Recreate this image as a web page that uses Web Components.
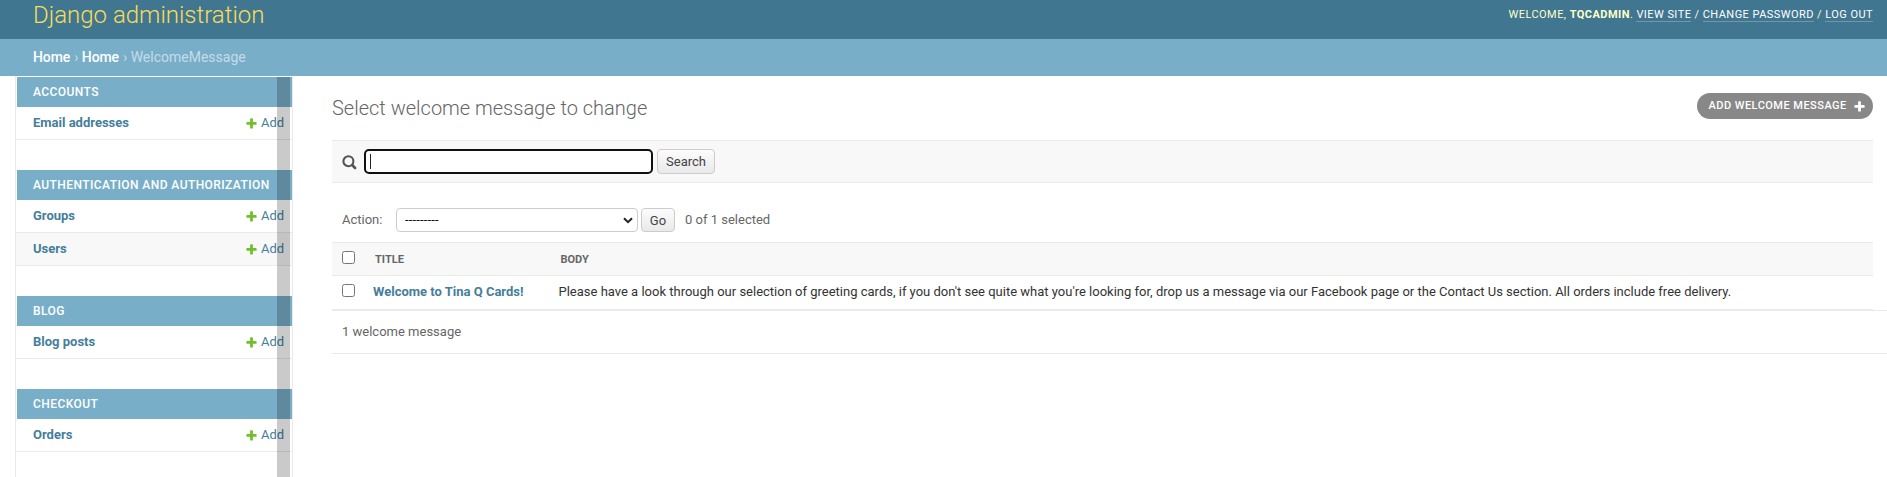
<!DOCTYPE html>
<html lang="en">
<head>
<meta charset="utf-8">
<title>Select welcome message to change | Django site admin</title>
<style>
html,body{margin:0;height:100%;overflow:hidden;background:#fff}
body{font-family:Roboto,"Liberation Sans",sans-serif;font-size:13px;color:#333}
</style>
</head>
<body>
<admin-page></admin-page>
<script>
const define=(name,html,setup)=>customElements.define(name,class extends HTMLElement{
  connectedCallback(){
    if(this.shadowRoot)return;
    const t=document.createElement('template');
    t.innerHTML=html;
    this.attachShadow({mode:'open'}).append(t.content.cloneNode(true));
    if(setup)setup(this,this.shadowRoot);
  }
});
const PLUS='M1600 796v192q0 40-28 68t-68 28h-416v416q0 40-28 68t-68 28h-192q-40 0-68-28t-28-68v-416h-416q-40 0-68-28t-28-68v-192q0-40 28-68t68-28h416v-416q0-40 28-68t68-28h192q40 0 68 28t28 68v416h416q40 0 68 28t28 68z';

define('admin-header',`<style>
:host{display:flex;justify-content:space-between;height:39px;box-sizing:border-box;padding:0 14px 0 33px;background:#417690;color:#ffc;overflow:hidden}
h1{margin:0;font-size:24px;font-weight:300;line-height:30px;color:#f5dd5d}
nav{font-size:11px;font-weight:400;letter-spacing:.45px;text-transform:uppercase;line-height:13px;padding-top:8px;white-space:nowrap}
strong{font-weight:700}
a{color:#fff;border-bottom:1px solid rgba(255,255,255,.25);text-decoration:none}
</style><h1>Django administration</h1>
<nav>Welcome, <strong>tqcadmin</strong>. <a>View site</a> / <a>Change password</a> / <a>Log out</a></nav>`);

define('bread-crumbs',`<style>
:host{display:block;height:37px;box-sizing:border-box;padding:10px 33px;background:#79aec8;color:#c4dce8;font-size:14px;line-height:16px}
::slotted(a){color:#fff;font-weight:500;letter-spacing:-.1px;margin-right:.5px}
</style><slot></slot>`);

define('add-link',`<style>
:host{display:flex;align-items:center;width:47px;color:#447e9b;font-size:13px}
svg{width:13px;height:13px;margin-right:3px}
</style><svg viewBox="0 0 1792 1792"><path fill="#70bf2b" d="${PLUS}"/></svg><span>Add</span>`);

define('model-row',`<style>
:host{display:flex;justify-content:space-between;align-items:flex-start;height:32px;box-sizing:content-box;border-bottom:1px solid #eaeaea;margin-left:-1px;padding:0 0 0 17px;background:#fff;line-height:32px}
:host([alt]){background:#f8f8f8}
b{color:#447e9b;font-weight:700;height:32px}
add-link{height:32px}
</style><b><slot></slot></b><add-link></add-link>`);

define('app-module',`<style>
:host{display:block;margin:0 0 30px 1px}
h2{margin:0;height:30px;line-height:30px;padding-left:16px;background:#79aec8;color:#fff;font-size:12px;font-weight:500;letter-spacing:.43px;text-transform:uppercase;white-space:nowrap}
</style><h2></h2><slot></slot>`,(h,r)=>r.querySelector('h2').textContent=h.getAttribute('label'));

define('nav-sidebar',`<style>
:host{display:block;position:relative;width:276px;margin-left:15px;padding-top:1px;border-left:1px solid #eaeaea;border-right:1px solid #eaeaea;box-sizing:content-box;flex:none}
.bar{position:absolute;top:1px;bottom:0;left:261px;width:13px;background:rgba(0,0,0,.208)}
</style>
<app-module label="Accounts"><model-row>Email addresses</model-row></app-module>
<app-module label="Authentication and Authorization"><model-row>Groups</model-row><model-row alt>Users</model-row></app-module>
<app-module label="Blog"><model-row>Blog posts</model-row></app-module>
<app-module label="Checkout"><model-row>Orders</model-row></app-module>
<div class="bar"></div>`);

define('page-title',`<style>
:host{display:flex;justify-content:space-between;align-items:flex-start;height:64px;padding-right:14px}
h1{margin:20px 0 0;font-size:20px;font-weight:300;line-height:24px;color:#666}
a{display:flex;align-items:center;margin-top:17px;width:176px;height:26px;border-radius:13px;background:#888;color:#fff;font-size:11px;font-weight:500;letter-spacing:.47px;text-transform:uppercase;box-sizing:border-box;padding:0 7px 2px 11.5px;justify-content:space-between;white-space:nowrap}
svg{width:13px;height:13px;position:relative;top:1px}
</style><h1>Select welcome message to change</h1>
<a>Add welcome message<svg viewBox="0 0 1792 1792"><path fill="#fff" d="${PLUS}"/></svg></a>`);

define('admin-button',`<style>
:host{display:block}
button{display:block;width:100%;height:100%;box-sizing:border-box;margin:0;padding:0;border:1px solid #ccc;border-radius:4px;background:linear-gradient(#fcfcfc,#e9e9e9);font:400 13px Roboto,sans-serif;color:#444}
</style><button><slot></slot></button>`);

define('search-bar',`<style>
:host{display:flex;align-items:flex-start;height:41px;border:solid #eaeaea;border-width:1px 0;background:#f8f8f8;margin-right:14px;padding-left:10px}
svg{width:15px;height:15px;margin:14px 7px 0 0}
.field{box-sizing:border-box;width:289px;height:25px;margin-top:8px;border:2px solid #101010;border-radius:5px;background:#fff;padding:3px 0 0 4px}
.caret{width:1px;height:15px;background:#222}
admin-button{width:58px;height:25px;margin:8px 0 0 4px}
</style>
<svg viewBox="0 0 15 15" fill="none" stroke="#555"><circle cx="6.4" cy="6.2" r="5" stroke-width="2.1"/><path d="M10.1 10l3 3" stroke-width="2.6" stroke-linecap="round"/></svg>
<div class="field"><div class="caret"></div></div><admin-button>Search</admin-button>`);

define('action-bar',`<style>
:host{display:flex;height:24px;margin-top:25px;padding-left:10px;color:#666;line-height:24px}
label{width:54px}
.select{display:flex;justify-content:space-between;align-items:center;width:242px;height:24px;box-sizing:border-box;border:1px solid #ccc;border-radius:4px;background:#fff;color:#111;padding:0 4px 0 8px}
svg{width:10px;height:7px}
.select span{letter-spacing:.15px}
admin-button{width:34px;margin:0 10px 0 3px}
</style><label>Action:</label><div class="select"><span>---------</span><svg viewBox="0 0 10 7" fill="none" stroke="#222" stroke-width="2"><path d="M1 1.2l4 4 4-4"/></svg></div><admin-button>Go</admin-button><span>0 of 1 selected</span>`);

define('check-box',`<style>
:host{display:block;box-sizing:border-box;width:13px;height:13px;border:1px solid #767676;border-radius:2.5px;background:#fff}
</style>`);

define('result-list',`<style>
:host{display:block;margin:10px 14px 0 0}
.row{display:grid;grid-template-columns:31px 185.5px 1fr;padding-left:10px;height:34px;line-height:32px;box-sizing:border-box;border-bottom:1px solid #eaeaea;white-space:nowrap}
.head{border-top:1px solid #eaeaea;line-height:33px;background:#f8f8f8;font-size:11px;font-weight:700;color:#666;text-transform:uppercase}
.head span{padding-left:2px}
check-box{margin-top:8px}
b{color:#447e9b}
</style>
<div class="row head"><check-box></check-box><span>Title</span><span>Body</span></div>
<div class="row"><check-box></check-box><b>Welcome to Tina Q Cards!</b><span>Please have a look through our selection of greeting cards, if you don't see quite what you're looking for, drop us a message via our Facebook page or the Contact Us section. All orders include free delivery.</span></div>`);

define('result-count',`<style>
:host{display:block;height:42px;line-height:42px;border:solid #eaeaea;border-width:1px 0;padding-left:10px;color:#666}
</style><slot></slot>`);

define('admin-page',`<style>
:host{display:flex;flex-direction:column;height:100%}
.body{display:flex;flex:1;min-height:0;overflow:hidden}
main{flex:1;min-width:0;margin-left:39px}
</style>
<admin-header></admin-header>
<bread-crumbs><a>Home</a> › <a>Home</a> › WelcomeMessage</bread-crumbs>
<div class="body"><nav-sidebar></nav-sidebar><main>
<page-title></page-title><search-bar></search-bar><action-bar></action-bar><result-list></result-list><result-count>1 welcome message</result-count>
</main></div>`);
</script>
</body>
</html>
